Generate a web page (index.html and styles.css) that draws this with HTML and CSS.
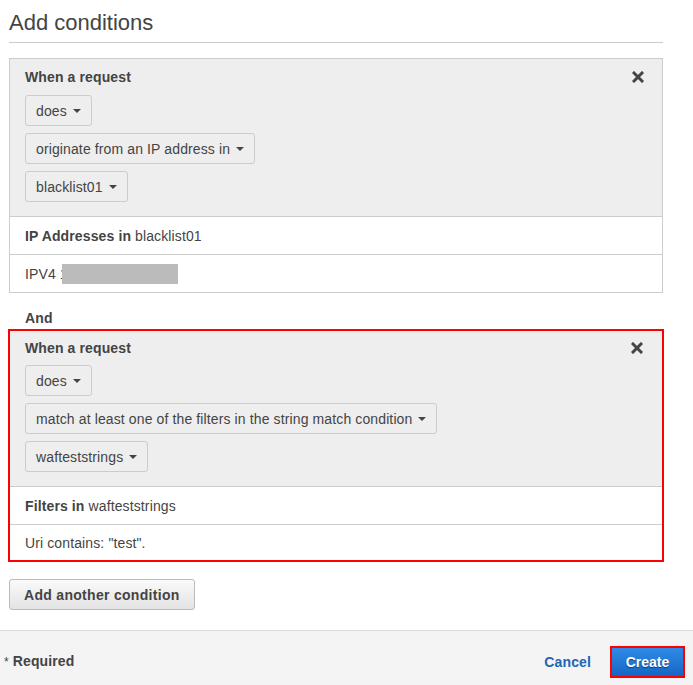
FILE: index.html
```html
<!DOCTYPE html>
<html>
<head>
<meta charset="utf-8">
<link rel="stylesheet" href="styles.css">
</head>
<body>
<div class="content">
  <h1 class="title">Add conditions</h1>

  <div class="panel">
    <div class="panel-head">
      <div class="head-row">
        <span class="label">When a request</span>
        <svg class="close" width="12" height="12" viewBox="0 0 12 12"><path d="M2 2L10 10M10 2L2 10" stroke="#444" stroke-width="3" stroke-linecap="square"/></svg>
      </div>
      <div class="dd">does <span class="caret"></span></div>
      <div class="dd">originate from an IP address in <span class="caret"></span></div>
      <div class="dd">blacklist01 <span class="caret"></span></div>
    </div>
    <div class="row"><b>IP Addresses in</b> blacklist01</div>
    <div class="row">IPV4 1<span class="redact"></span></div>
  </div>

  <div class="and">And</div>

  <div class="panel highlighted">
    <div class="panel-head">
      <div class="head-row">
        <span class="label">When a request</span>
        <svg class="close" width="12" height="12" viewBox="0 0 12 12"><path d="M2 2L10 10M10 2L2 10" stroke="#444" stroke-width="3" stroke-linecap="square"/></svg>
      </div>
      <div class="dd">does <span class="caret"></span></div>
      <div class="dd">match at least one of the filters in the string match condition <span class="caret"></span></div>
      <div class="dd">wafteststrings <span class="caret"></span></div>
    </div>
    <div class="row"><b>Filters in</b> wafteststrings</div>
    <div class="row">Uri contains: "test".</div>
  </div>

  <button class="btn-add">Add another condition</button>
</div>

<div class="footer">
  <div class="req"><span class="star">*</span> <b>Required</b></div>
  <div class="actions">
    <a class="cancel">Cancel</a>
    <button class="create">Create</button>
  </div>
</div>
</body>
</html>
```

FILE: styles.css
```css
html, body {
  margin: 0;
  padding: 0;
  background: #fff;
  font-family: "Liberation Sans", Arial, sans-serif;
  font-size: 14px;
  color: #444;
  letter-spacing: 0.12px;
}
.content {
  padding: 0 30px 0 9px;
}
.title {
  margin: 0;
  padding-top: 9px;
  font-size: 22px;
  font-weight: normal;
  color: #444;
  letter-spacing: 0;
  line-height: 28px;
  padding-bottom: 5px;
  border-bottom: 1px solid #ccc;
  margin-bottom: 15px;
}
.panel {
  border: 1px solid #ccc;
  background: #fff;
}
.panel.highlighted {
  border: 2px solid #f00;
  margin-left: -1px;
  margin-right: -1px;
}
.panel-head {
  background: #eee;
  padding: 8px 15px 7px 15px;
  border-bottom: 1px solid #ccc;
}
.highlighted .panel-head {
  padding-top: 7px;
  padding-right: 16px;
}
.head-row {
  display: flex;
  justify-content: space-between;
  align-items: center;
  height: 20px;
  margin-bottom: 8px;
}
.highlighted .head-row {
  margin-bottom: 7px;
}
.label {
  font-weight: bold;
}
.close {
  margin-right: 3px;
}
.dd {
  display: flex;
  width: max-content;
  align-items: center;
  height: 29px;
  padding: 0 10px;
  border: 1px solid #ccc;
  border-radius: 3px;
  background: #eee;
  margin-bottom: 7px;
  color: #444;
}
.caret {
  display: inline-block;
  width: 0;
  height: 0;
  border-left: 4px solid transparent;
  border-right: 4px solid transparent;
  border-top: 4px solid #444;
  margin-left: 6px;
}
.row {
  height: 37px;
  padding-left: 15px;
  border-top: 1px solid #ccc;
  display: flex;
  align-items: center;
}
.panel-head + .row {
  border-top: none;
}
.highlighted .row:last-child {
  height: 35px;
}
.row b {
  margin-right: 4px;
}
.redact {
  display: inline-block;
  width: 116px;
  height: 20px;
  background: #bbb;
  margin-left: -6px;
}
.and {
  font-weight: bold;
  padding: 17px 0 3px 16px;
  line-height: 16px;
}
.btn-add {
  margin-top: 17px;
  height: 31px;
  padding: 0 14px;
  font-family: inherit;
  font-size: 14px;
  font-weight: bold;
  letter-spacing: 0.3px;
  color: #444;
  border: 1px solid #bbb;
  border-radius: 3px;
  background: linear-gradient(#fafafa, #e3e3e3);
}
.footer {
  margin-top: 20px;
  background: #f4f4f4;
  border-top: 1px solid #ddd;
  height: 60px;
  display: flex;
  align-items: center;
  justify-content: space-between;
  padding: 0 8px 0 4px;
}
.req {
  font-size: 14px;
}
.star {
  font-size: 12px;
}
.actions {
  display: flex;
  align-items: center;
  gap: 19px;
  margin-top: 1px;
}
.cancel {
  color: #2264b3;
  font-weight: bold;
}
.create {
  height: 32px;
  width: 75px;
  font-family: inherit;
  font-size: 14px;
  font-weight: bold;
  color: #fff;
  border: 2px solid #f00;
  background: linear-gradient(#2f8be6, #1665c5);
  text-shadow: 0 1px 1px #0a3d7a;
  padding: 0;
}
```
